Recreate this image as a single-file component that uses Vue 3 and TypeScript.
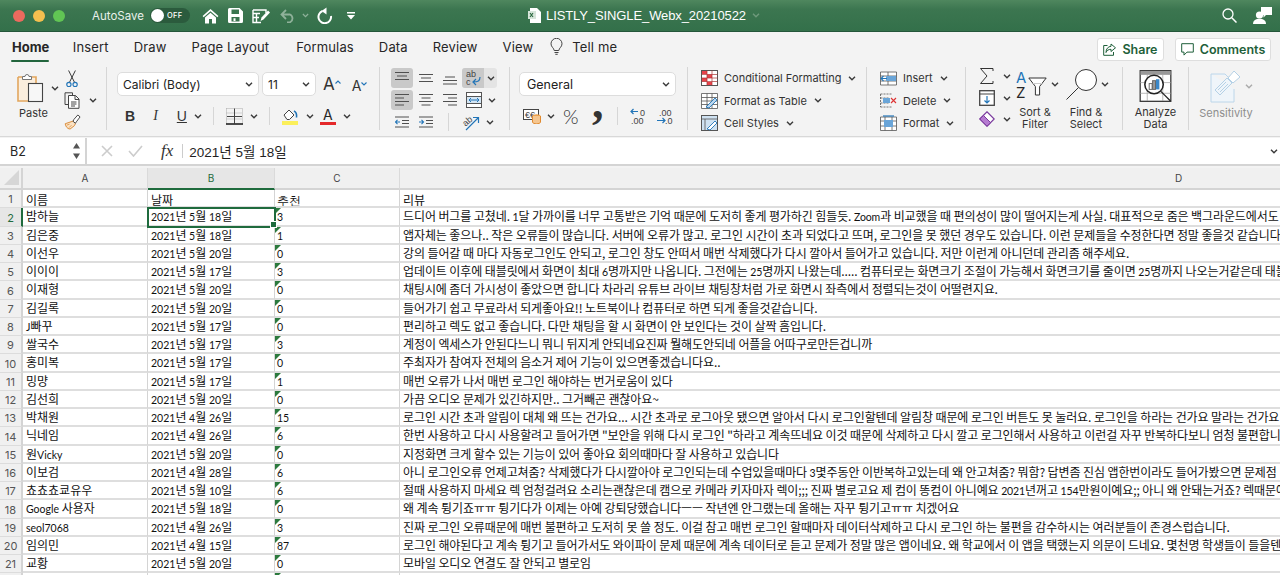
<template>
	<div class="excel">
		<!-- sprite -->
		<svg class="sprite" aria-hidden="true">
			<symbol id="chev" viewBox="0 0 8 5"><path d="M1 .8l3 3 3-3" fill="none" stroke="currentColor" stroke-width="1.4" /></symbol>
		</svg>

		<div class="titlebar">
			<div class="title-left">
				<span class="light red"></span>
				<span class="light yellow"></span>
				<span class="light green"></span>
				<span class="autosave">AutoSave</span>
				<span class="toggle"><i></i><b>OFF</b></span>
				<svg class="tb-home" width="17" height="16" viewBox="0 0 17 16"><path d="M8.5 1L.6 8l1 1.2L8.5 3.3l6.900 5.900 1-1.200zM3 9.500V15.500h4V11h3v4.500h4V9.500L8.500 4.700z" fill="#fff" /></svg>
				<svg class="tb-save" width="15" height="15" viewBox="0 0 15 15"><path d="M1.500 0h10L15 3.500V13.500A1.500 1.500 0 0 1 13.500 15h-12A1.500 1.500 0 0 1 0 13.500V1.500A1.500 1.500 0 0 1 1.500 0zM3.500 1.500V6h7.500V1.500zM3.500 9v4.500h8V9zM5.500 10.200h2V13h-2z" fill="#fff" fill-rule="evenodd" /></svg>
				<svg class="tb-edit" width="19" height="16" viewBox="0 0 19 16"><path d="M1 2h13v3M1 2v12.500h8M1 5.500h7M4.500 5.500v9M1 9.500h6" fill="none" stroke="#fff" stroke-width="1.400" /><path d="M8.500 13l1-3.500 6.500-7 2 2-6.500 7z" fill="#fff" /></svg>
				<svg class="tb-undo" width="16" height="14" viewBox="0 0 16 14"><path d="M6 1L1.500 5.500 6 10M2 5.500h8a4.300 4.300 0 0 1 0 7.800H7" fill="none" stroke="#8fb19a" stroke-width="1.800" /></svg>
				<svg class="tb-undochev chev"><use href="#chev" /></svg>
				<svg class="tb-redo" width="17" height="17" viewBox="0 0 17 17"><path d="M5.500 4A6.300 6.300 0 1 0 14 9" fill="none" stroke="#fff" stroke-width="2" /><path d="M9.500 .5v7l-5-3.500z" fill="#fff" /></svg>
				<svg class="tb-more" width="8" height="8" viewBox="0 0 8 8"><path d="M0 0h8v1.400H0zM0 3h8L4 7.500z" fill="#fff" /></svg>
			</div>
			<div class="title-file">
				<svg width="13" height="15" viewBox="0 0 13 15"><path d="M2 0h7l4 4v11H2z" fill="#fff" /><rect y="3" width="8" height="8" fill="#d7e5da" /><path d="M2 5l3 4M5 5L2 9" stroke="#2f6b42" stroke-width="1.200" /></svg>
				<span>LISTLY_SINGLE_Webx_20210522</span>
				<svg class="chev file-chev"><use href="#chev" /></svg>
			</div>
			<div class="title-right">
				<svg width="15" height="15" viewBox="0 0 15 15"><circle cx="6" cy="6" r="5" fill="none" stroke="#fff" stroke-width="1.300" /><path d="M9.800 9.800L14.500 14.500" stroke="#fff" stroke-width="1.500" /></svg>
				<svg width="19" height="17" viewBox="0 0 19 17"><circle cx="6.500" cy="8" r="3.600" fill="#fff" /><path d="M0 17c0-3.800 3-5.200 6.500-5.200S13 13.200 13 17z" fill="#fff" /><path d="M8 0h11v8h-6l-2.500 2.500V8H8z" fill="#fff" /></svg>
			</div>
		</div>

		<div class="tabbar">
			<span v-for="t in tabs" :key="t" class="tab" :class="{ active: t === 'Home', wide: t === 'Page Layout' }">{{ t }}</span>
			<svg class="bulb" width="13" height="17" viewBox="0 0 13 17"><path d="M4.200 12.500C4 10 1 9 1 5.800a5.500 5.500 0 0 1 11 0C12 9 9 10 8.800 12.500zM4.500 14.500h4M5.300 16.300h2.400" fill="none" stroke="#444" stroke-width="1" /></svg>
			<span class="tab tellme">Tell me</span>
			<div class="share-btns">
				<button class="pill share">
					<svg width="13" height="13" viewBox="0 0 13 13"><path d="M8 1l4.500 3.800L8 8.500V6.300C5.500 6.300 3.800 7.500 3 9.500 3 6 5 3.500 8 3.300zM4.500 2.500H.7v9.800h9.800V9" fill="none" stroke="#1f5f3a" stroke-width="1" /></svg>
					Share
				</button>
				<button class="pill comments">
					<svg width="13" height="13" viewBox="0 0 13 13"><path d="M.7.7h11.600v8.400H6l-3 3V9.100H.7z" fill="none" stroke="#1f5f3a" stroke-width="1" /></svg>
					Comments
				</button>
			</div>
		</div>

		<div class="ribbon">
			<div class="group clip">
				<div class="paste">
					<div class="paste-top">
						<svg width="29" height="33" viewBox="0 0 29 33"><path d="M1 5h4M15 5h4v6M1 5v24h10" fill="none" stroke="#e3a65c" stroke-width="1.600" /><path d="M2 6h16v5H11v17H2z" fill="#fbeedd" /><path d="M5.500 4.500h2.500a2 2 0 0 1 4 0h2.500v3h-9z" fill="#fff" stroke="#666" stroke-width=".9" /><rect x="11.500" y="11.500" width="14" height="18" fill="#f7f7f7" stroke="#444" stroke-width="1.100" /></svg>
						<svg class="chev"><use href="#chev" /></svg>
					</div>
					<span class="lbl">Paste</span>
				</div>
				<div class="clip-tools">
					<svg class="cut" width="12" height="18" viewBox="0 0 12 18"><path d="M2.500 .5L8.500 12.500M9.500 .5L3.500 12.500" stroke="#333" stroke-width="1" /><circle cx="2.800" cy="15" r="2.200" fill="none" stroke="#2275b8" stroke-width="1.200" /><circle cx="9.200" cy="15" r="2.200" fill="none" stroke="#2275b8" stroke-width="1.200" /></svg>
					<div class="tool-row">
						<svg width="17" height="17" viewBox="0 0 17 17"><path d="M4 12.500H1V.8h7.500v2.500" fill="none" stroke="#444" stroke-width="1" /><path d="M4.500 3.500h7l3.500 3.500v9.300H4.500zM11 3.500V7.500h4M7 10h5.500M7 12h5.500M7 14h4" fill="#fff" stroke="#444" stroke-width="1" /></svg>
						<svg class="chev"><use href="#chev" /></svg>
					</div>
					<svg width="17" height="16" viewBox="0 0 17 16"><path d="M10 7L1 10c0 2 2 5.500 5 5.500l4.500-3.500 1-2z" fill="#fbe3c5" stroke="#d98a38" stroke-width="1" /><path d="M2.500 11.500l3-1M5 14l2.500-2.500" stroke="#d98a38" stroke-width=".8" /><path d="M10 5.500L14 1l2.300 2-3.800 5-1 1.500-2.500-2z" fill="#fff" stroke="#444" stroke-width="1" /></svg>
				</div>
			</div>

			<div class="group font">
				<div class="row-top">
					<span class="select font-name">Calibri (Body)<svg class="chev"><use href="#chev" /></svg></span>
					<span class="select font-size">11<svg class="chev"><use href="#chev" /></svg></span>
					<span class="bigger">A<sup>
						<svg width="6" height="4" viewBox="0 0 6 4"><path d="M.5 3.500L3 1l2.500 2.500" fill="none" stroke="#2275b8" stroke-width="1.100" /></svg>
					</sup></span>
					<span class="smaller">A<sup>
						<svg width="6" height="4" viewBox="0 0 6 4"><path d="M.5.5L3 3l2.500-2.500" fill="none" stroke="#2275b8" stroke-width="1.100" /></svg>
					</sup></span>
				</div>
				<div class="row-bottom">
					<b class="fmt bold">B</b>
					<i class="fmt ital">I</i>
					<span class="fmt under">U</span>
					<svg class="chev"><use href="#chev" /></svg>
					<span class="vsep s1"></span>
					<svg class="border-ico" width="17" height="17" viewBox="0 0 17 17"><path d="M.5.500h16M.5 5h16M.5.500v15M16.500.500v15M.5 11h16" fill="none" stroke="#aaa" stroke-width="1" stroke-dasharray="1 1" /><path d="M8.500.500v15M1 8.500h15" stroke="#444" stroke-width="1" /><path d="M0 16h17" stroke="#222" stroke-width="1.600" /></svg>
					<svg class="chev"><use href="#chev" /></svg>
					<span class="vsep s2"></span>
					<svg class="fill-ico" width="17" height="17" viewBox="0 0 17 17"><path d="M2 7l5-5 5 5-4.500 4.500H5z" fill="#fff" stroke="#444" stroke-width="1" /><path d="M12 3c2 1 3 3 2.500 6.500" fill="none" stroke="#2275b8" stroke-width="1.600" /><rect y="13" width="16" height="4" fill="#fbef5a" /></svg>
					<svg class="chev"><use href="#chev" /></svg>
					<span class="color-a">A</span>
					<svg class="chev"><use href="#chev" /></svg>
				</div>
			</div>

			<div class="group align">
				<div class="al-row">
					<span class="al pressed"><svg width="14" height="14" viewBox="0 0 14 14"><path d="M0 1.500h14M2 5h10M0 8.500h14" class="ln" /></svg></span>
					<span class="al"><svg width="14" height="14" viewBox="0 0 14 14"><path d="M0 3.500h14M2 7h10M0 10.500h14" class="ln" /></svg></span>
					<span class="al"><svg width="14" height="14" viewBox="0 0 14 14"><path d="M2 6h10M0 9.500h14M0 13h14" class="ln" /></svg></span>
					<span class="wrap"><span class="wrap-i"><svg width="16" height="17" viewBox="0 0 16 17"><text x="1" y="7" class="mini">ab</text><text x="1" y="15" class="mini">c</text><path d="M15 7c0 4-2 5-7 5M11 9l-3 3 3 3" fill="none" stroke="#2275b8" stroke-width="1.200" /></svg></span><svg class="chev"><use href="#chev" /></svg></span>
				</div>
				<div class="al-row">
					<span class="al pressed"><svg width="14" height="14" viewBox="0 0 14 14"><path d="M0 1.500h14M0 5h9M0 8.500h14M0 12h9" class="ln" /></svg></span>
					<span class="al"><svg width="14" height="14" viewBox="0 0 14 14"><path d="M0 1.500h14M2.500 5h9M0 8.500h14M2.500 12h9" class="ln" /></svg></span>
					<span class="al"><svg width="14" height="14" viewBox="0 0 14 14"><path d="M0 1.500h14M5 5h9M0 8.500h14M5 12h9" class="ln" /></svg></span>
					<span class="merge"><svg width="16" height="16" viewBox="0 0 16 16"><rect x=".5" y=".5" width="15" height="15" fill="#fff" stroke="#555" /><path d="M0 4.500h16M0 11.500h16" stroke="#555" /><rect x="1" y="5" width="14" height="6" fill="#d5e6f4" /><path d="M3 8h10M5 6l-2 2 2 2M11 6l2 2-2 2" fill="none" stroke="#2275b8" stroke-width="1" /></svg><svg class="chev"><use href="#chev" /></svg></span>
				</div>
				<div class="al-row third">
					<span class="al"><svg width="14" height="14" viewBox="0 0 14 14"><path d="M0 2h14M7 5.500h7M7 8.500h7M0 12h14" class="ln" /><path d="M5 7H0M2.500 4.800L.5 7l2 2.200" fill="none" stroke="#2275b8" stroke-width="1.100" /></svg></span>
					<span class="al"><svg width="14" height="14" viewBox="0 0 14 14"><path d="M0 2h14M7 5.500h7M7 8.500h7M0 12h14" class="ln" /><path d="M0 7h5M2.500 4.800l2 2.200-2 2.200" fill="none" stroke="#2275b8" stroke-width="1.100" /></svg></span>
					<span class="vsep s3"></span>
					<svg class="orient" width="18" height="17" viewBox="0 0 18 17"><text x="1" y="10" class="mini" transform="rotate(-40 6 8)">ab</text><path d="M4 16L16 4M11 3.500h5.500V9" fill="none" stroke="#2275b8" stroke-width="1.200" /></svg>
					<svg class="chev"><use href="#chev" /></svg>
				</div>
			</div>

			<div class="group number">
				<span class="select num-select">General<svg class="chev"><use href="#chev" /></svg></span>
				<div class="num-row">
					<svg width="19" height="16" viewBox="0 0 19 16"><rect x=".5" y="1.500" width="15" height="10" fill="#fff" stroke="#444" /><text x="2" y="10" class="mini">€€</text><ellipse cx="13.500" cy="8" rx="4" ry="1.800" fill="#eca04c" /><path d="M9.500 8v6c0 2.400 8 2.400 8 0V8" fill="#f5c690" stroke="#e08a30" /></svg>
					<svg class="chev"><use href="#chev" /></svg>
					<span class="pct">%</span>
					<span class="comma">,</span>
					<span class="vsep s4"></span>
					<span class="dec">
						<svg width="17" height="17" viewBox="0 0 17 17"><path d="M8 3.500H1M3.500 1L1 3.500 3.500 6" fill="none" stroke="#2275b8" stroke-width="1.200" /><text x="10" y="8" class="tiny">0</text><text x="1" y="16" class="tiny">.00</text></svg>
					</span>
					<span class="dec">
						<svg width="17" height="17" viewBox="0 0 17 17"><text x="3" y="8" class="tiny">.00</text><path d="M1 12.500h8M6.500 10L9 12.500 6.500 15" fill="none" stroke="#2275b8" stroke-width="1.200" /><text x="9" y="16" class="tiny">.0</text></svg>
					</span>
				</div>
			</div>

			<div class="group styles">
				<div class="list-row">
					<svg width="17" height="16" viewBox="0 0 17 16"><rect x=".5" y=".5" width="16" height="15" fill="#fff" stroke="#555" /><path d="M1 1h5v3H1zM6 4.500h5v3.500H6zM1 8h5v3.500H1zM6 12h5v3H6z" fill="#e8434b" /><path d="M6 .5v15M11 .5v15M.5 4.500h16M.5 8h16M.5 11.500h16" stroke="#a33" stroke-width=".7" /></svg>
					<span>Conditional Formatting</span><svg class="chev"><use href="#chev" /></svg>
				</div>
				<div class="list-row">
					<svg width="17" height="16" viewBox="0 0 17 16"><path d="M.5.500h16v15H.5zM.5 4.500h16M.5 8h16M.5 11.500h16M6 .500v15M11 .500v15" fill="#fff" stroke="#555" stroke-width=".8" /><path d="M5 14L14 5l2 2-8 8z" fill="#bcd7ee" stroke="#2275b8" stroke-width=".9" /></svg>
					<span>Format as Table</span><svg class="chev"><use href="#chev" /></svg>
				</div>
				<div class="list-row">
					<svg width="17" height="16" viewBox="0 0 17 16"><rect x=".5" y=".5" width="16" height="15" fill="#cfe2f2" stroke="#555" /><path d="M.5 4h16M4 4v12" stroke="#555" stroke-width=".8" /><path d="M6 14l8-8 2 2-7 7z" fill="#fff" stroke="#2275b8" stroke-width=".9" /></svg>
					<span>Cell Styles</span><svg class="chev"><use href="#chev" /></svg>
				</div>
			</div>

			<div class="group cells">
				<div class="list-row">
					<svg width="17" height="15" viewBox="0 0 17 15"><path d="M.5 1h16v13H.5zM.5 5h16M.5 10h16M8 1v13" fill="#fff" stroke="#555" stroke-width=".8" /><rect x="6" y="5" width="10" height="5" fill="#6aa5d8" /><path d="M7 7.500H1M3.500 5L1 7.500 3.500 10" fill="none" stroke="#2275b8" stroke-width="1.100" /></svg>
					<span>Insert</span><svg class="chev"><use href="#chev" /></svg>
				</div>
				<div class="list-row">
					<svg width="17" height="15" viewBox="0 0 17 15"><path d="M.5 1h12M.5 14h12M.5 1v13M.5 5h8M.5 10h8" fill="none" stroke="#555" stroke-width=".8" stroke-dasharray="2 1" /><rect x="3" y="5" width="7" height="5" fill="#6aa5d8" /><path d="M11 5l5 5M16 5l-5 5" stroke="#d33" stroke-width="1.100" /></svg>
					<span>Delete</span><svg class="chev"><use href="#chev" /></svg>
				</div>
				<div class="list-row">
					<svg width="17" height="16" viewBox="0 0 17 16"><path d="M.5 2h16v13.500H.5zM.5 6h16M.5 11h16M5 2v13.500M12 2v13.500" fill="#fff" stroke="#555" stroke-width=".8" /><rect x="4" y="5" width="9" height="7" fill="#6aa5d8" /><path d="M3 1h11" stroke="#2275b8" stroke-width="1.200" /></svg>
					<span>Format</span><svg class="chev"><use href="#chev" /></svg>
				</div>
			</div>

			<div class="group editing">
				<div class="edit-stack">
					<div class="tool-row"><svg width="16" height="18" viewBox="0 0 16 18"><path d="M14 4V1.500H1.500L8 9l-6.500 7.500H14V14" fill="none" stroke="#333" stroke-width="1" /></svg><svg class="chev"><use href="#chev" /></svg></div>
					<div class="tool-row"><svg width="16" height="16" viewBox="0 0 16 16"><rect x=".7" y=".7" width="14.600" height="14.600" fill="#fff" stroke="#444" stroke-width="1.300" /><path d="M.7 4h14.600" stroke="#444" /><path d="M8 6v7M5.500 10.500L8 13l2.500-2.500" fill="none" stroke="#2275b8" stroke-width="1.200" /></svg><svg class="chev"><use href="#chev" /></svg></div>
					<div class="tool-row"><svg width="16" height="16" viewBox="0 0 16 16"><path d="M.8 8L8 .8 15.200 8 8 15.200z" fill="#fff" stroke="#7a3a9e" stroke-width="1.200" /><path d="M4.500 4.500L11.700 11.700 8 15.200.8 8z" fill="#b57bd0" stroke="#7a3a9e" stroke-width="1" /></svg><svg class="chev"><use href="#chev" /></svg></div>
				</div>
				<div class="big sort">
					<div class="big-top">
						<span class="az"><em>A</em><span>Z</span></span>
						<svg class="funnel" width="19" height="19" viewBox="0 0 19 19"><path d="M.8 1h17.400l-6.600 8.500v8.500h-4.200V9.500z" fill="#fff" stroke="#333" stroke-width="1" /><path d="M5 6.500h9" stroke="#ccc" /></svg>
						<svg class="chev"><use href="#chev" /></svg>
					</div>
					<span class="lbl">Sort &amp;<br />Filter</span>
				</div>
				<div class="big find">
					<div class="big-top">
						<svg width="31" height="31" viewBox="0 0 31 31"><circle cx="20" cy="11" r="10.500" fill="#fff" stroke="#333" stroke-width="1" /><path d="M12.500 18.500L.5 30.500" stroke="#333" stroke-width="1" /></svg>
						<svg class="chev"><use href="#chev" /></svg>
					</div>
					<span class="lbl">Find &amp;<br />Select</span>
				</div>
			</div>

			<div class="group analyze">
				<svg width="33" height="33" viewBox="0 0 33 33"><rect x=".7" y=".7" width="31.600" height="31.600" fill="#fff" stroke="#333" stroke-width="1.300" /><rect x="1" y="1" width="31" height="4" fill="#999" /><path d="M0 13h33M0 24h33M8 5v27M24 5v27" stroke="#999" stroke-width=".7" /><circle cx="15" cy="15" r="9.500" fill="#fff" stroke="#222" stroke-width="1.600" /><rect x="10" y="14" width="3" height="6" fill="#fff" stroke="#666" /><rect x="13.500" y="11" width="3" height="9" fill="#999" stroke="#666" /><rect x="17" y="9.500" width="3.500" height="10.500" fill="#3a87c8" /><path d="M22 22l10 10" stroke="#222" stroke-width="1.300" /></svg>
				<span class="lbl">Analyze<br />Data</span>
			</div>

			<div class="group sens">
				<div class="big-top">
					<svg width="31" height="33" viewBox="0 0 31 33"><path d="M1 4h14l3 3v-.5M1 4v28h23V19" fill="#eff5fa" stroke="#bcd6ea" stroke-width="1" /><path d="M5 20l12-12 5 5-12 12z" fill="#eff5fa" stroke="#b5d1e6" stroke-width="1" /><path d="M8 20l8-8M10 22l8-8" stroke="#b5d1e6" /><path d="M18 8l6-7 6 6-7 6z" fill="#fff" stroke="#b5d1e6" /></svg>
					<svg class="chev sens-chev"><use href="#chev" /></svg>
				</div>
				<span class="lbl">Sensitivity</span>
			</div>
		</div>

		<div class="formula">
			<div class="namebox">
				<span>B2</span>
				<svg width="9" height="20" viewBox="0 0 9 20"><path d="M4.500 2L8 7.500H1zM4.500 18L1 12.500h7z" fill="#555" /></svg>
			</div>
			<svg class="f-x" width="12" height="12" viewBox="0 0 12 12"><path d="M1 1l10 10M11 1L1 11" stroke="#ccc" stroke-width="1.600" /></svg>
			<svg class="f-ok" width="15" height="12" viewBox="0 0 15 12"><path d="M1 6l4.500 5L14 1" fill="none" stroke="#ccc" stroke-width="1.600" /></svg>
			<span class="f-fx">fx</span>
			<span class="f-sep"></span>
			<span class="f-text">2021년 5월 18일</span>
			<svg class="chev f-chev"><use href="#chev" /></svg>
		</div>

		<div class="sheet">
			<div class="corner"><span></span></div>
			<div v-for="c in columns" :key="c" class="col-head" :class="{ on: c === 'B' }">{{ c }}</div>

			<template v-for="(r, i) in rows" :key="i">
				<div class="row-head" :class="{ on: i === 1 }">{{ i < 21 ? i + 1 : "" }}</div>
				<div class="cell name" :class="{ first: i === 0 }">
					<template v-for="(p, j) in split(r.name)" :key="j"><span :class="{ latin: p.latin }">{{ p.text }}</span></template>
				</div>
				<div class="cell date" :class="{ selected: i === 1, first: i === 0 }">
					<template v-for="(p, j) in split(r.date)" :key="j"><span :class="{ latin: p.latin }">{{ p.text }}</span></template>
					<i v-if="i === 1" class="handle"></i>
				</div>
				<div class="cell rec" :class="{ flag: i > 0, first: i === 0 }">
					<span class="latin">{{ r.rec }}</span>
				</div>
				<div class="cell review" :class="{ first: i === 0 }">
					<template v-for="(p, j) in split(r.review)" :key="j"><span :class="{ latin: p.latin }">{{ p.text }}</span></template>
				</div>
			</template>
		</div>
	</div>
</template>

<script setup lang="ts">
interface Row {
	name: string;
	date: string;
	rec: string;
	review: string;
}

const tabs = ["Home", "Insert", "Draw", "Page Layout", "Formulas", "Data", "Review", "View"];
const columns = ["A", "B", "C", "D"];

const rows: Row[] = [
	{ name: "이름", date: "날짜", rec: "추천", review: "리뷰" },
	{ name: "밤하늘", date: "2021년 5월 18일", rec: "3", review: "드디어 버그를 고쳤네. 1달 가까이를 너무 고통받은 기억 때문에 도저히 좋게 평가하긴 힘들듯. Zoom과 비교했을 때 편의성이 많이 떨어지는게 사실. 대표적으로 줌은 백그라운드에서도" },
	{ name: "김은중", date: "2021년 5월 18일", rec: "1", review: "앱자체는 좋으나.. 작은 오류들이 많습니다. 서버에 오류가 많고. 로그인 시간이 초과 되었다고 뜨며, 로그인을 못 했던 경우도 있습니다. 이런 문제들을 수정한다면 정말 좋을것 같습니다" },
	{ name: "이선우", date: "2021년 5월 20일", rec: "0", review: "강의 들어갈 때 마다 자동로그인도 안되고, 로그인 창도 안떠서 매번 삭제했다가 다시 깔아서 들어가고 있습니다. 저만 이런게 아니던데 관리좀 해주세요." },
	{ name: "이이이", date: "2021년 5월 17일", rec: "3", review: "업데이트 이후에 태블릿에서 화면이 최대 6명까지만 나옵니다. 그전에는 25명까지 나왔는데..... 컴퓨터로는 화면크기 조절이 가능해서 화면크기를 줄이면 25명까지 나오는거같은데 태블릿" },
	{ name: "이재형", date: "2021년 5월 20일", rec: "0", review: "채팅시에 좀더 가시성이 좋았으면 합니다 차라리 유튜브 라이브 채팅창처럼 가로 화면시 좌측에서 정렬되는것이 어떨련지요." },
	{ name: "김길록", date: "2021년 5월 20일", rec: "0", review: "들어가기 쉽고 무료라서 되게좋아요!! 노트북이나 컴퓨터로 하면 되게 좋을것같습니다." },
	{ name: "J빠꾸", date: "2021년 5월 17일", rec: "0", review: "편리하고 렉도 없고 좋습니다. 다만 채팅을 할 시 화면이 안 보인다는 것이 살짝 흠입니다." },
	{ name: "쌀국수", date: "2021년 5월 17일", rec: "3", review: "계정이 엑세스가 안된다느니 뭐니 뒤지게 안되네요진짜 뭘해도안되네 어플을 어따구로만든겁니까" },
	{ name: "홍미복", date: "2021년 5월 17일", rec: "0", review: "주최자가 참여자 전체의 음소거 제어 기능이 있으면좋겠습니다요.." },
	{ name: "밍먕", date: "2021년 5월 17일", rec: "1", review: "매번 오류가 나서 매번 로그인 해야하는 번거로움이 있다" },
	{ name: "김선희", date: "2021년 5월 20일", rec: "0", review: "가끔 오디오 문제가 있긴하지만.. 그거빼곤 괜찮아요~" },
	{ name: "박채원", date: "2021년 4월 26일", rec: "15", review: "로그인 시간 초과 알림이 대체 왜 뜨는 건가요... 시간 초과로 로그아웃 됐으면 알아서 다시 로그인할텐데 알림창 때문에 로그인 버튼도 못 눌러요. 로그인을 하라는 건가요 말라는 건가요" },
	{ name: "닉네임", date: "2021년 4월 26일", rec: "6", review: "한번 사용하고 다시 사용할려고 들어가면 \"보안을 위해 다시 로그인 \"하라고 계속뜨네요 이것 때문에 삭제하고 다시 깔고 로그인해서 사용하고 이런걸 자꾸 반복하다보니 엄청 불편합니다" },
	{ name: "원Vicky", date: "2021년 5월 20일", rec: "0", review: "지정화면 크게 할수 있는 기능이 있어 좋아요 회의때마다 잘 사용하고 있습니다" },
	{ name: "이보검", date: "2021년 4월 28일", rec: "6", review: "아니 로그인오류 언제고쳐줌? 삭제했다가 다시깔아야 로그인되는데 수업있을때마다 3몇주동안 이반복하고있는데 왜 안고쳐줌? 뭐함? 답변좀 진심 앱한번이라도 들어가봤으면 문제점" },
	{ name: "쵸쵸쵸쿄유우", date: "2021년 5월 10일", rec: "6", review: "절때 사용하지 마세요 렉 엄청걸려요 소리는괜찮은데 캠으로 카메라 키자마자 렉이;;; 진짜 별로고요 제 컴이 똥컴이 아니예요 2021년꺼고 154만원이예요;; 아니 왜 안돼는거죠? 렉때문에" },
	{ name: "Google 사용자", date: "2021년 5월 18일", rec: "0", review: "왜 계속 튕기죠ㅠㅠ 튕기다가 이제는 아예 강퇴당했습니다ㅡㅡ 작년엔 안그랬는데 올해는 자꾸 튕기고ㅠㅠ 치겠어요" },
	{ name: "seol7068", date: "2021년 4월 26일", rec: "3", review: "진짜 로그인 오류때문에 매번 불편하고 도저히 못 쓸 정도. 이걸 참고 매번 로그인 할때마자 데이터삭제하고 다시 로그인 하는 불편을 감수하시는 여러분들이 존경스럽습니다." },
	{ name: "임의민", date: "2021년 4월 15일", rec: "87", review: "로그인 해야된다고 계속 튕기고 들어가서도 와이파이 문제 때문에 계속 데이터로 듣고 문제가 정말 많은 앱이네요. 왜 학교에서 이 앱을 택했는지 의문이 드네요. 몇천명 학생들이 들을텐데" },
	{ name: "교황", date: "2021년 5월 20일", rec: "0", review: "모바일 오디오 연결도 잘 안되고 별로임" },
	{ name: "", date: "", rec: "", review: "" },
];

// 숫자/영문만 따로 감싸서 Calibri 폭에 가깝게
const split = (s: string) =>
	s
		.split(/([0-9A-Za-z]+)/)
		.filter((t) => t !== "")
		.map((t) => ({ text: t, latin: /^[0-9A-Za-z]/.test(t) }));
</script>

<style>
html,
body {
	margin: 0;
	background: #fff;
}
</style>

<style scoped>
.excel {
	width: 1280px;
	height: 575px;
	overflow: hidden;
	display: flex;
	flex-direction: column;
	font-family: Inter, "Liberation Sans", "Noto Sans CJK KR", sans-serif;
	color: #262626;
	background: #f3f3f3;
}
.sprite {
	display: none;
}
.chev {
	width: 8px;
	height: 5px;
	color: #3a3a3a;
	flex: none;
}

/* title bar */
.titlebar {
	height: 32px;
	flex: none;
	box-sizing: border-box;
	display: flex;
	align-items: center;
	background: linear-gradient(to bottom, #4f875e, #3c7650 30%, #33704a);
	border-bottom: 1px solid #24563a;
	color: #fff;
}
.title-left {
	width: 528px;
	flex: none;
	display: flex;
	align-items: center;
	padding-left: 13px;
	box-sizing: border-box;
}
.light {
	width: 12px;
	height: 12px;
	border-radius: 50%;
	margin-right: 8px;
}
.red {
	background: #ec6a5e;
}
.yellow {
	background: #f4bf4f;
}
.green {
	background: #61c554;
}
.autosave {
	margin-left: 19px;
	font-size: 11.5px;
	color: #e9f1eb;
}
.toggle {
	margin-left: 6px;
	width: 40px;
	height: 15px;
	border-radius: 8px;
	background: #2b5b3d;
	display: flex;
	align-items: center;
	gap: 3px;
}
.toggle i {
	width: 13px;
	height: 13px;
	margin-left: 1px;
	border-radius: 50%;
	background: #fff;
}
.toggle b {
	font-size: 7.5px;
	font-weight: 500;
	letter-spacing: 0.3px;
}
.tb-home {
	margin-left: 12px;
}
.tb-save {
	margin-left: 9px;
}
.tb-edit {
	margin-left: 9px;
}
.tb-undo {
	margin-left: 9px;
}
.tb-undochev {
	margin-left: 6px;
	color: #8fb19a;
	width: 7px;
}
.tb-redo {
	margin-left: 8px;
}
.tb-more {
	margin-left: 13px;
}
.title-file {
	display: flex;
	align-items: center;
	gap: 5px;
	font-size: 13px;
	font-family: "Liberation Sans", sans-serif;
	letter-spacing: -0.1px;
}
.file-chev {
	color: #6f9a7c;
	margin-left: 1px;
}
.title-right {
	margin-left: auto;
	padding-right: 8px;
	display: flex;
	align-items: center;
	gap: 16px;
}

/* tabs */
.tabbar {
	height: 28px;
	flex: none;
	display: flex;
	align-items: center;
	padding-left: 12px;
	box-sizing: border-box;
	gap: 25px;
}
.tab {
	font-size: 13px;
	line-height: 28px;
	position: relative;
	margin-top: 1px;
	letter-spacing: 0.15px;
}
.tab.active {
	font-weight: 700;
	letter-spacing: 0;
	margin-right: -1.5px;
}
.tab.wide {
	margin-right: 2px;
}
.tab.active::after {
	content: "";
	position: absolute;
	left: -1px;
	right: 0;
	bottom: -1px;
	height: 2px;
	border-radius: 1px;
	background: #22653d;
}
.bulb {
	margin-left: -8px;
}
.tellme {
	margin-left: -16px;
}
.share-btns {
	margin-left: auto;
	padding-right: 9px;
	display: flex;
	gap: 11px;
	margin-top: 6px;
}
.pill {
	height: 23px;
	box-sizing: border-box;
	padding: 0;
	display: flex;
	align-items: center;
	justify-content: center;
	gap: 6px;
	background: #fff;
	border: 1px solid #dedede;
	border-radius: 3px;
	color: #1f5f3a;
	font: 600 12.5px Inter, sans-serif;
}
.share {
	width: 67px;
}
.comments {
	width: 96px;
}

/* ribbon */
.ribbon {
	height: 77px;
	flex: none;
	box-sizing: border-box;
	display: grid;
	grid-template-columns: 107px 273px 130px 178px 179px 99px 157px 66px 1fr;
	padding-top: 7px;
	border-bottom: 1px solid #d8d8d8;
	font-size: 11px;
}
.group {
	height: 63px;
	box-sizing: border-box;
	border-right: 1px solid #d6d6d6;
}
.lbl {
	font-size: 11px;
	line-height: 12px;
	text-align: center;
	color: #333;
	display: block;
}
.select {
	height: 24px;
	box-sizing: border-box;
	display: flex;
	align-items: center;
	justify-content: space-between;
	background: #fff;
	border: 1px solid #dddddd;
	border-radius: 5px;
	padding: 0 5px 0 5px;
	font-size: 12px;
	color: #222;
}
.tool-row {
	display: flex;
	align-items: center;
	gap: 8px;
}
.clip {
	display: flex;
	padding-left: 17px;
}
.paste {
	width: 47px;
}
.paste-top {
	display: flex;
	align-items: center;
	gap: 5px;
	margin-top: 3px;
	height: 36px;
}
.paste .lbl {
	width: 33px;
	margin-top: 1px;
}
.clip-tools {
	display: flex;
	flex-direction: column;
	gap: 5px;
	margin-top: 3px;
}
.cut {
	margin-left: 2px;
}

.font {
	padding: 5px 0 0 10px;
}
.row-top {
	display: flex;
	align-items: center;
}
.font-name {
	width: 142px;
}
.font-size {
	width: 54px;
	margin-left: 3px;
}
.bigger,
.smaller {
	font-size: 17px;
	display: flex;
	color: #333;
}
.bigger {
	margin-left: 7px;
}
.smaller {
	font-size: 14px;
	margin-left: 11px;
	margin-top: 2px;
}
.bigger sup,
.smaller sup {
	line-height: 8px;
	margin-top: 1px;
}
.row-bottom {
	display: flex;
	align-items: center;
	height: 22px;
	margin-top: 9px;
}
.fmt {
	font-family: "Liberation Sans", sans-serif;
	font-size: 14px;
	color: #333;
}
.bold {
	margin-left: 8px;
}
.ital {
	margin-left: 18px;
	font-family: "Liberation Serif", serif;
}
.under {
	margin-left: 19px;
	text-decoration: underline;
}
.row-bottom .chev {
	margin-left: 7px;
}
.vsep {
	width: 1px;
	height: 18px;
	background: #d6d6d6;
	flex: none;
}
.s1 {
	margin: 0 12px 0 11px;
}
.s2 {
	margin: 0 12px 0 11px;
}
.color-a {
	margin-left: 6px;
	width: 16px;
	text-align: center;
	font-size: 14px;
	line-height: 14px;
	border-bottom: 3px solid #e4292a;
}

.align {
	padding: 1px 0 0 11px;
}
.al-row {
	display: flex;
	align-items: center;
	gap: 2px;
	height: 20px;
	margin-bottom: 2px;
}
.al {
	width: 22px;
	height: 20px;
	display: flex;
	align-items: center;
	justify-content: center;
	border-radius: 3px;
}
.pressed {
	background: #c9c9c9;
}
.ln {
	fill: none;
	stroke: #505050;
	stroke-width: 1.2;
}
.wrap {
	margin-left: -1px;
	width: 35px;
	height: 20px;
	display: flex;
	align-items: center;
	background: #e4e4e4;
	border-radius: 3px;
}
.wrap-i {
	width: 22px;
	height: 20px;
	background: #c9c9c9;
	border-radius: 3px 0 0 3px;
	display: flex;
	align-items: center;
	justify-content: center;
	margin-right: 3px;
}
.merge {
	display: flex;
	align-items: center;
	margin-left: 3px;
	gap: 6px;
}
.mini {
	font-size: 9px;
	fill: #444;
	font-family: "Liberation Sans", sans-serif;
}
.tiny {
	font-size: 9px;
	fill: #444;
	font-family: "Liberation Sans", sans-serif;
}
.third {
	margin-top: 1px;
}
.s3 {
	margin: 0 11px 0 9px;
}
.orient {
	overflow: visible;
}
.orient + .chev {
	margin-left: 4px;
}

.number {
	padding: 5px 0 0 9px;
}
.num-select {
	width: 157px;
	padding-left: 7px;
	font-size: 12.5px;
}
.num-row {
	display: flex;
	align-items: center;
	height: 22px;
	margin-top: 9px;
	padding-left: 4px;
}
.num-row .chev {
	margin-left: 5px;
}
.pct {
	margin-left: 8px;
	width: 17px;
	font-size: 20px;
	font-weight: 300;
	line-height: 20px;
	font-family: Lato, sans-serif;
	color: #333;
}
.comma {
	margin-left: 12px;
	width: 12px;
	font-size: 46px;
	line-height: 22px;
	margin-top: -26px;
	font-weight: 700;
	font-family: "Liberation Serif", serif;
	color: #333;
}
.s4 {
	margin: 0 12px 0 13px;
}
.dec {
	display: flex;
	margin-right: 9px;
}
.dec svg {
	overflow: visible;
}

.styles {
	padding: 0 0 0 13px;
}
.cells {
	padding: 0 0 0 13px;
}
.list-row {
	display: flex;
	align-items: center;
	height: 22.5px;
	font-size: 11px;
	color: #333;
}
.list-row > span {
	margin-left: 6px;
}
.list-row .chev {
	margin-left: 7px;
}

.editing {
	display: flex;
	padding-left: 13px;
}
.edit-stack {
	display: flex;
	flex-direction: column;
	gap: 5px;
	width: 37px;
}
.big {
	display: flex;
	flex-direction: column;
}
.big-top {
	display: flex;
	align-items: center;
	height: 36px;
}
.sort {
	width: 50px;
}
.find {
	width: 52px;
}
.sort .lbl,
.find .lbl {
	margin-top: 4px;
	width: 38px;
}
.find .lbl {
	width: 40px;
}
.az {
	display: flex;
	flex-direction: column;
	font-size: 15px;
	line-height: 15px;
	width: 12px;
}
.az em {
	font-style: normal;
	color: #2275b8;
}
.funnel {
	margin-top: 3px;
}
.big-top .chev {
	margin-left: 4px;
}
.analyze {
	display: flex;
	flex-direction: column;
	align-items: center;
	padding-top: 3px;
}
.analyze .lbl {
	margin-top: 4px;
}
.sens {
	border-right: 0;
	padding: 3px 0 0 21px;
}
.sens .big-top {
	height: 33px;
}
.sens-chev {
	color: #aaa;
	margin-left: 5px;
}
.sens .lbl {
	width: 60px;
	margin: 4px 0 0 -14px;
	color: #8d8d8d;
}

/* formula bar */
.formula {
	height: 28px;
	flex: none;
	box-sizing: border-box;
	margin-top: 1px;
	display: flex;
	align-items: center;
	background: #fff;
	border-bottom: 2px solid #d4d4d4;
	font-size: 13px;
}
.namebox {
	width: 87px;
	height: 100%;
	box-sizing: border-box;
	display: flex;
	align-items: center;
	justify-content: space-between;
	padding: 0 4px 0 10px;
	border-right: 2px solid #d4d4d4;
	font-size: 12.5px;
}
.f-x {
	margin-left: 14px;
}
.f-ok {
	margin-left: 15px;
}
.f-fx {
	margin-left: 18px;
	font: italic 17px "Liberation Serif", serif;
	color: #333;
}
.f-sep {
	width: 1px;
	height: 14px;
	background: #ccc;
	margin-left: 9px;
}
.f-text {
	margin-left: 6px;
	font-family: "Liberation Sans", "Noto Sans CJK KR", sans-serif;
	font-size: 13.5px;
	color: #1f1f1f;
}
.f-chev {
	margin-left: auto;
	margin-right: 2px;
}

/* sheet */
.sheet {
	flex: 1;
	min-height: 0;
	margin-top: 2px;
	overflow: hidden;
	display: grid;
	grid-template-columns: 23px 125px 127px 125px 1558px;
	grid-template-rows: 22px repeat(22, 18.25px);
	background: #fff;
	font-family: "Noto Sans CJK KR", sans-serif;
	font-size: 12px;
	color: #111;
}
.corner {
	background: #f0f0f0;
	border-right: 2px solid #d4d4d4;
	border-bottom: 2px solid #d4d4d4;
	box-sizing: border-box;
	display: flex;
	align-items: flex-end;
	justify-content: flex-end;
	padding: 0 2px 3px 0;
}
.corner span {
	width: 0;
	height: 0;
	border-left: 15px solid transparent;
	border-bottom: 15px solid #d6d6d6;
}
.col-head {
	background: #f0f0f0;
	border-right: 1px solid #dadada;
	border-bottom: 2px solid #d4d4d4;
	box-sizing: border-box;
	display: flex;
	align-items: center;
	justify-content: center;
	font: 10px Inter, "Liberation Sans", sans-serif;
	color: #444;
}
.col-head.on {
	background: #e6e6e6;
	color: #1f6b3d;
	border-bottom-color: #1f6b3d;
}
.row-head {
	background: #f0f0f0;
	border-right: 2px solid #d4d4d4;
	border-bottom: 1px solid #dcdcdc;
	box-sizing: border-box;
	display: flex;
	align-items: flex-end;
	justify-content: center;
	font: 11px/16px Inter, "Liberation Sans", sans-serif;
	color: #555;
}
.row-head.on {
	background: #e6e6e6;
	color: #1f6b3d;
	border-right-color: #1f6b3d;
}
.cell {
	box-sizing: border-box;
	position: relative;
	border-right: 1px solid #d4d4d4;
	border-bottom: 2px solid #dedede;
	white-space: nowrap;
	overflow: hidden;
	padding-left: 3px;
	line-height: 16px;
}
.cell.first {
	padding-top: 2px;
}
.review {
	border-right: 0;
	letter-spacing: -0.1px;
}
.date {
	overflow: visible;
}
.latin {
	font-family: Lato, "Liberation Sans", sans-serif;
	font-size: 10.5px;
}
.first .latin {
	font-size: 12px;
}
.rec {
	padding-left: 2px;
}
.flag::before {
	content: "";
	position: absolute;
	left: 0;
	top: 0;
	border-top: 6px solid #2c7a3e;
	border-right: 6px solid transparent;
}
.selected {
	outline: 2px solid #1f6b3d;
	outline-offset: -1px;
	z-index: 2;
}
.handle {
	position: absolute;
	right: -3px;
	bottom: -3px;
	width: 5px;
	height: 5px;
	background: #1f6b3d;
	border: 1px solid #fff;
}
</style>
